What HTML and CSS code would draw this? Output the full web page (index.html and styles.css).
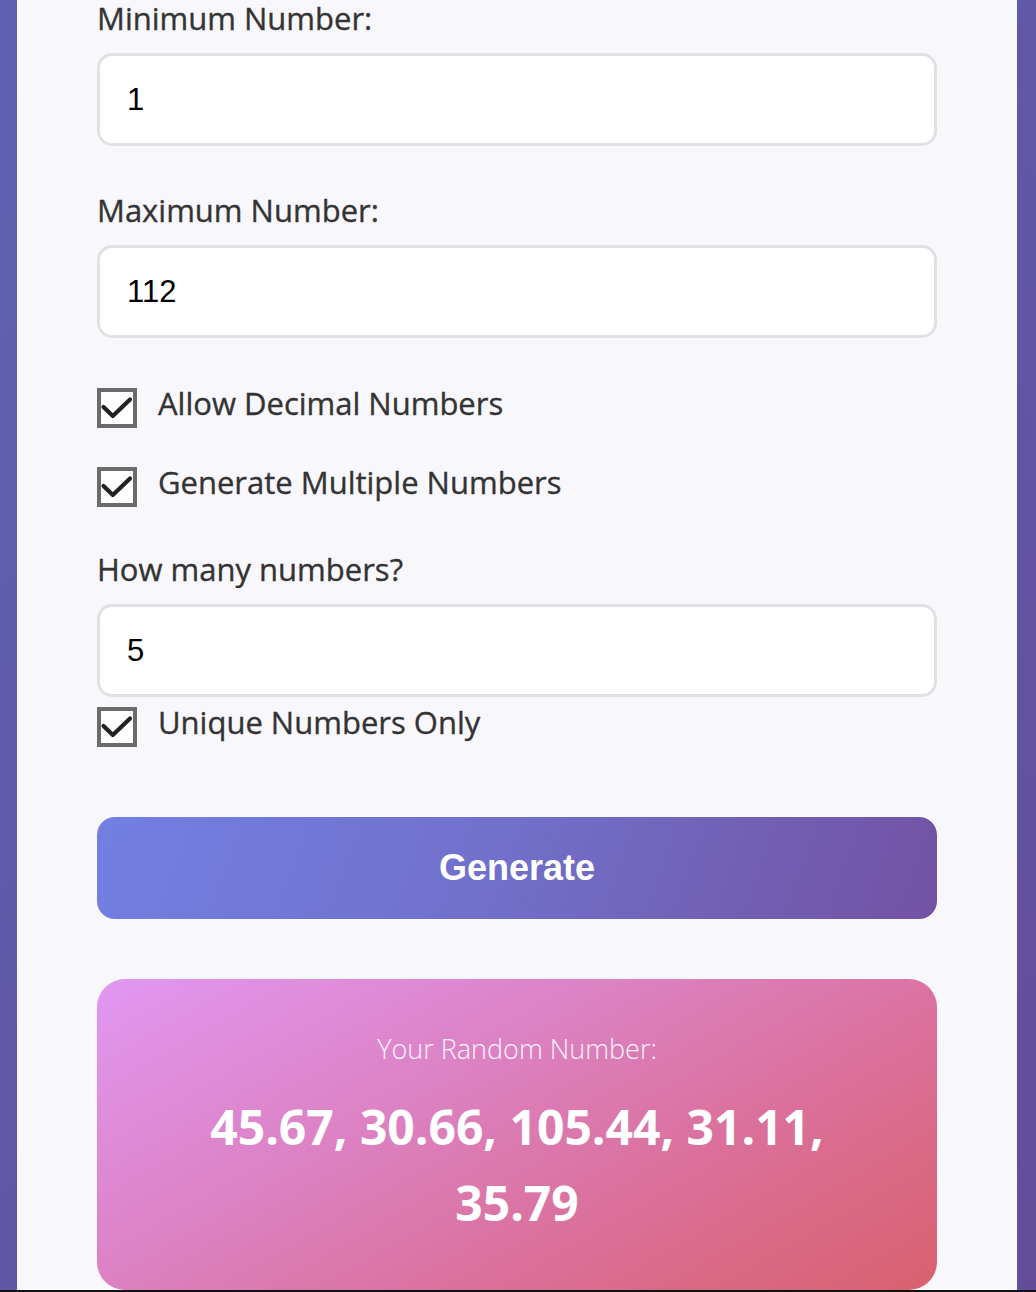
FILE: index.html
```html
<!DOCTYPE html>
<html lang="en">
<head>
<meta charset="utf-8">
<title>Random Number Generator</title>
<link rel="stylesheet" href="styles.css">
</head>
<body>
<main class="card">
  <div class="field">
    <label class="field-label" for="min">Minimum Number:</label>
    <input class="field-input" id="min" type="text" value="1">
  </div>
  <div class="field">
    <label class="field-label" for="max">Maximum Number:</label>
    <input class="field-input" id="max" type="text" value="112">
  </div>
  <div class="checks">
    <label class="check">
      <span class="check-box"><svg viewBox="0 0 40 40" width="40" height="40"><path d="M6.5 19 L15.8 28 L33 11.5" fill="none" stroke="#222" stroke-width="4.2" stroke-linecap="round" stroke-linejoin="round"/></svg></span>
      <span class="check-text">Allow Decimal Numbers</span>
    </label>
    <label class="check">
      <span class="check-box"><svg viewBox="0 0 40 40" width="40" height="40"><path d="M6.5 19 L15.8 28 L33 11.5" fill="none" stroke="#222" stroke-width="4.2" stroke-linecap="round" stroke-linejoin="round"/></svg></span>
      <span class="check-text">Generate Multiple Numbers</span>
    </label>
  </div>
  <div class="field field-count">
    <label class="field-label" for="count">How many numbers?</label>
    <input class="field-input" id="count" type="text" value="5">
    <label class="check check-unique">
      <span class="check-box"><svg viewBox="0 0 40 40" width="40" height="40"><path d="M6.5 19 L15.8 28 L33 11.5" fill="none" stroke="#222" stroke-width="4.2" stroke-linecap="round" stroke-linejoin="round"/></svg></span>
      <span class="check-text">Unique Numbers Only</span>
    </label>
  </div>
  <button class="generate" type="button">Generate</button>
  <section class="result">
    <div class="result-label">Your Random Number:</div>
    <div class="result-value">45.67, 30.66, 105.44, 31.11,<br>35.79</div>
  </section>
</main>
<div class="frame-edge"></div>
</body>
</html>
```
FILE: styles.css
```css
html, body {
  margin: 0;
  padding: 0;
}
body {
  background: linear-gradient(135deg, #5f62b3 0%, #6157a6 50%, #634c98 100%);
  min-height: 1292px;
  font-family: "Open Sans", "Noto Sans", sans-serif;
  color: #333;
  overflow: hidden;
}
.card {
  margin-left: 17px;
  width: 1000px;
  box-sizing: border-box;
  background: #f8f7fc;
  padding: 0 80px 60px;
  min-height: 1400px;
}
.field {
  display: flex;
  flex-direction: column;
  margin-bottom: 45px;
}
.field:first-child {
  margin-top: -1px;
}
.field-label {
  font-size: 31px;
  line-height: 38px;
  margin-bottom: 16px;
  color: #333;
  -webkit-text-stroke: 0.35px #333;
}
.field-input {
  box-sizing: border-box;
  width: 840px;
  height: 93px;
  border: 3px solid #e1e1e1;
  border-radius: 15px;
  background: #fff;
  padding: 0 27px;
  font-family: "Liberation Sans", Arial, sans-serif;
  font-size: 31px;
  color: #000;
  outline: none;
}
.checks {
  display: flex;
  flex-direction: column;
  gap: 39px;
  margin-top: 50px;
  margin-bottom: 43px;
}
.check {
  display: flex;
  align-items: flex-start;
  gap: 21px;
}
.check-box {
  box-sizing: border-box;
  width: 40px;
  height: 40px;
  border: 4px solid #6b6b6b;
  background: #fff;
  display: block;
  flex: none;
}
.check-box svg {
  display: block;
  margin: -4px;
}
.check-text {
  font-size: 31px;
  line-height: 38px;
  margin-top: -4px;
  color: #333;
  -webkit-text-stroke: 0.35px #333;
}
.field-count {
  margin-bottom: 70px;
}
.check-unique {
  margin-top: 10px;
}
.generate {
  display: block;
  width: 840px;
  height: 102px;
  border: none;
  border-radius: 18px;
  background: linear-gradient(110deg, #7280e2 0%, #7171cc 45%, #7252a3 100%);
  color: #fff;
  font-family: "Liberation Sans", Arial, sans-serif;
  font-weight: bold;
  font-size: 36px;
  padding: 0;
  margin-bottom: 60px;
}
.result {
  box-sizing: border-box;
  width: 840px;
  height: 311px;
  border-radius: 28px;
  background: linear-gradient(150deg, #e197f2 0%, #dc80c0 40%, #da6e95 70%, #d9616e 100%);
  color: #fff;
  text-align: center;
  padding-top: 53px;
}
.result-label {
  font-size: 27px;
  font-weight: 300;
  line-height: 34px;
  opacity: 0.92;
  margin-bottom: 23px;
}
.result-value {
  font-size: 48px;
  font-weight: 700;
  line-height: 76px;
}
.frame-edge {
  position: fixed;
  left: 0;
  right: 0;
  bottom: 0;
  height: 2px;
  background: #111;
}
```
